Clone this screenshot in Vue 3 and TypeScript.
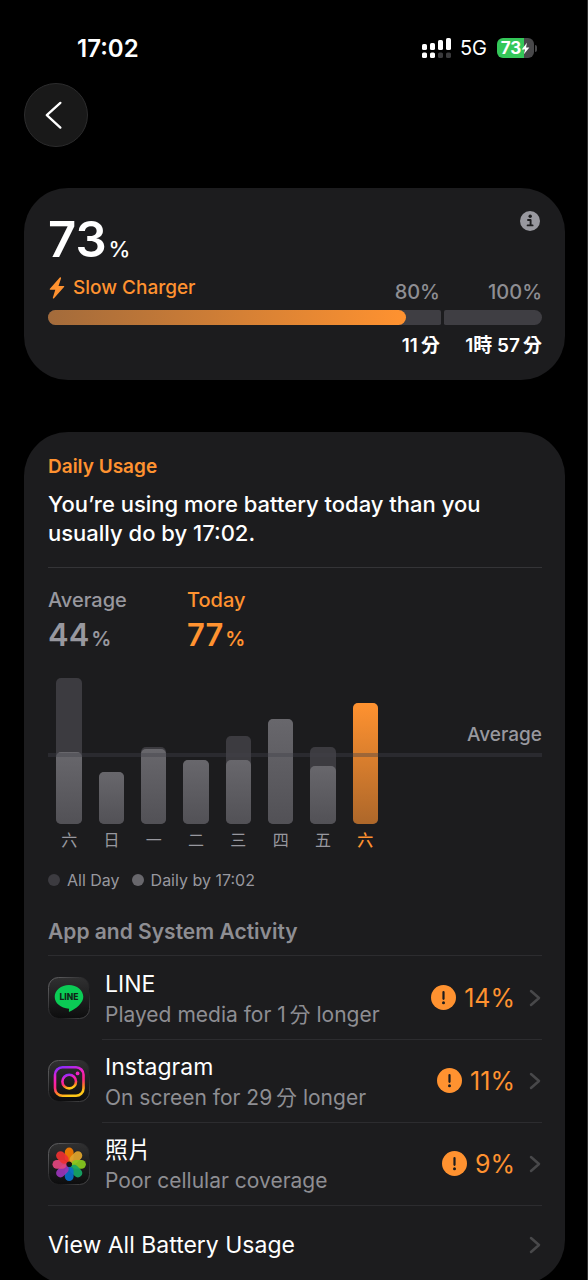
<script setup lang="ts">
interface DayUsage {
  label: string
  allDay: number
  byNow: number
  today?: boolean
}

interface AppActivity {
  id: 'line' | 'instagram' | 'photos'
  name: string
  detail: string
  percent: number
}

const days: DayUsage[] = [
  { label: '六', allDay: 93, byNow: 46 },
  { label: '日', allDay: 33, byNow: 33 },
  { label: '一', allDay: 49, byNow: 48 },
  { label: '二', allDay: 41, byNow: 41 },
  { label: '三', allDay: 56, byNow: 41 },
  { label: '四', allDay: 67, byNow: 67 },
  { label: '五', allDay: 49, byNow: 37 },
  { label: '六', allDay: 77, byNow: 77, today: true },
]

const average = 44

const apps: AppActivity[] = [
  { id: 'line', name: 'LINE', detail: 'Played media for 1\u2009分 longer', percent: 14 },
  { id: 'instagram', name: 'Instagram', detail: 'On screen for 29\u2009分 longer', percent: 11 },
  { id: 'photos', name: '照片', detail: 'Poor cellular coverage', percent: 9 },
]

const petals = [
  { angle: 0, color: '#f57c00' },
  { angle: 45, color: '#e0a52c' },
  { angle: 90, color: '#86c81e' },
  { angle: 135, color: '#16a765' },
  { angle: 180, color: '#0a6fc8' },
  { angle: 225, color: '#9a35b8' },
  { angle: 270, color: '#e0457e' },
  { angle: 315, color: '#ee3030' },
]
</script>

<template>
  <div class="page">
    <header class="status">
      <time class="clock">17:02</time>
      <div class="indicators">
        <svg class="signal" viewBox="0 0 29 20" aria-label="Signal strength">
          <g fill="#fff">
            <rect x="0" y="6" width="5" height="6" rx="1.6" />
            <rect x="8" y="5" width="5" height="7" rx="1.6" />
            <rect x="16" y="2" width="5" height="10" rx="1.6" />
            <rect x="24" y="0" width="5" height="12" rx="1.6" />
            <rect x="0" y="14.500" width="5" height="5.500" rx="1.600" />
            <rect x="8" y="14.500" width="5" height="5.500" rx="1.600" />
          </g>
          <g fill="#3a3a3c">
            <rect x="16" y="14.500" width="5" height="5.500" rx="1.600" />
            <rect x="24" y="14.500" width="5" height="5.500" rx="1.600" />
          </g>
        </svg>
        <span class="network">5G</span>
        <div class="battery">
          <span class="battery-body">73<svg viewBox="0 0 10 14" class="battery-bolt"><path d="M6.600 0.500 0.800 8h3.600L3.200 13.500 9.300 5.800H5.600Z" fill="#fff" /></svg></span>
          <span class="battery-cap"></span>
        </div>
      </div>
    </header>

    <button class="back" type="button" aria-label="Back">
      <svg viewBox="0 0 64 64">
        <path d="M36.500 19.500 22.500 32.200 36.500 45" fill="none" stroke="#fff" stroke-width="2.400" stroke-linecap="round" stroke-linejoin="round" />
      </svg>
    </button>

    <main>
      <section class="card charge">
        <div class="charge-top">
          <div class="level">73<small>%</small></div>
          <button class="info" type="button" aria-label="Information">
            <svg viewBox="0 0 20 20">
              <circle cx="10" cy="10" r="10" fill="#98989f" />
              <circle cx="10.200" cy="5.300" r="1.700" fill="#1c1c1e" />
              <path d="M8 9h2.600v5.200M7.600 14.400h5" fill="none" stroke="#1c1c1e" stroke-width="1.900" stroke-linecap="round" stroke-linejoin="round" />
            </svg>
          </button>
        </div>
        <div class="charge-labels">
          <div class="charger">
            <svg viewBox="0 0 16 22"><path d="M10.800 0.600 0.900 11.700c-.5.6-.2 1 .4 1h5L3.900 20.600c-.3 1 .5 1.300 1.100.6L15 9.900c.5-.6.200-1-.4-1H9.500l2.500-7.500c.3-1-.6-1.500-1.200-.8Z" fill="#ff9230" /></svg>
            <span>Slow Charger</span>
          </div>
          <span class="mark">80%</span>
          <span class="mark last">100%</span>
        </div>
        <div class="track">
          <div class="segment first"><div class="fill" :style="{ width: (73 / 80) * 100 + '%' }"></div></div>
          <div class="segment second"></div>
        </div>
        <div class="times">
          <span>11&#8201;分</span>
          <span class="last">1時 57&#8201;分</span>
        </div>
      </section>

      <section class="card usage">
        <h2>Daily Usage</h2>
        <p class="summary">You’re using more battery today than you usually do by 17:02.</p>

        <div class="stats">
          <div class="stat">
            <span class="stat-label">Average</span>
            <span class="stat-value">44<small>%</small></span>
          </div>
          <div class="stat now">
            <span class="stat-label">Today</span>
            <span class="stat-value">77<small>%</small></span>
          </div>
        </div>

        <div class="chart">
          <div class="plot">
            <div class="columns">
              <div v-for="(day, i) in days" :key="i" class="column">
                <div class="bar whole" :style="{ height: day.allDay + '%' }"></div>
                <div class="bar part" :class="{ today: day.today }" :style="{ height: day.byNow + '%' }"></div>
              </div>
            </div>
            <div class="average" :style="{ bottom: average + '%' }"><span>Average</span></div>
          </div>
          <div class="columns names">
            <span v-for="(day, i) in days" :key="i" :class="{ current: day.today }">{{ day.label }}</span>
          </div>
        </div>

        <div class="legend">
          <span class="dot"></span><span>All Day</span>
          <span class="dot light"></span><span>Daily by 17:02</span>
        </div>

        <h3>App and System Activity</h3>
        <ul class="apps">
          <li v-for="app in apps" :key="app.id">
            <a href="#" class="app">
              <svg v-if="app.id === 'line'" class="icon" viewBox="0 0 42 42">
                <defs>
                  <linearGradient id="tile" x1="0" y1="0" x2="0" y2="1"><stop offset="0" stop-color="#303031" /><stop offset="1" stop-color="#0d0d0e" /></linearGradient>
                  <linearGradient id="edge" x1="0" y1="0" x2="1" y2="1"><stop offset="0" stop-color="#6a6a6c" /><stop offset=".4" stop-color="#303032" /><stop offset=".65" stop-color="#1a1a1c" /><stop offset="1" stop-color="#505052" /></linearGradient>
                </defs>
                <rect x=".5" y=".5" width="41" height="41" rx="10" fill="url(#tile)" stroke="url(#edge)" />
                <path d="M21 8c8 0 14.300 5.200 14.300 11.800 0 3.300-1.600 6-4.400 8.600-2.800 2.600-6.400 4.900-9 6.100-1.100.5-1.200-.1-1-1l.2-1.700C12.500 31.100 6.700 26.100 6.700 19.800 6.700 13.200 13 8 21 8Z" fill="#0bcb55" />
                <text x="21" y="23.200" text-anchor="middle" font-family="Inter, sans-serif" font-weight="800" font-size="8.500" fill="#102417">LINE</text>
              </svg>
              <svg v-else-if="app.id === 'instagram'" class="icon" viewBox="0 0 42 42">
                <defs>
                  <linearGradient id="ig" x1=".15" y1="0" x2=".45" y2="1"><stop offset="0" stop-color="#8a2cff" /><stop offset=".3" stop-color="#ef20c8" /><stop offset=".62" stop-color="#ff2585" /><stop offset=".82" stop-color="#ff7a28" /><stop offset="1" stop-color="#ffc818" /></linearGradient>
                </defs>
                <rect x=".5" y=".5" width="41" height="41" rx="10" fill="url(#tile)" stroke="url(#edge)" />
                <g fill="none" stroke="url(#ig)" stroke-width="2.600">
                  <rect x="7" y="7.300" width="28.500" height="28.500" rx="7.500" />
                  <circle cx="21.200" cy="21.600" r="6.800" />
                </g>
                <circle cx="29.600" cy="13.400" r="1.900" fill="#f322c4" />
              </svg>
              <svg v-else class="icon" viewBox="0 0 42 42">
                <rect x=".5" y=".5" width="41" height="41" rx="10" fill="url(#tile)" stroke="url(#edge)" />
                <g>
                  <rect v-for="petal in petals" :key="petal.angle" x="16.800" y="4.600" width="8.800" height="14.200" rx="4.400" :fill="petal.color" fill-opacity=".93" :transform="`rotate(${petal.angle} 21.200 21.300)`" />
                </g>
                <circle cx="21.200" cy="21.300" r="2.600" fill="#161617" />
              </svg>
              <span class="copy">
                <span class="name">{{ app.name }}</span>
                <span class="detail">{{ app.detail }}</span>
              </span>
              <svg class="alert" viewBox="0 0 25 25">
                <circle cx="12.500" cy="12.500" r="12.500" fill="#ff9230" />
                <path d="M12.500 7v6.800" stroke="#1c1c1e" stroke-width="2.200" stroke-linecap="round" />
                <circle cx="12.500" cy="17.800" r="1.500" fill="#1c1c1e" />
              </svg>
              <span class="percent">{{ app.percent }}%</span>
              <svg class="chevron" viewBox="0 0 12 18"><path d="M2 2l8 7-8 7" /></svg>
            </a>
          </li>
        </ul>
        <a href="#" class="all">
          <span>View All Battery Usage</span>
          <svg class="chevron" viewBox="0 0 12 18"><path d="M2 2l8 7-8 7" /></svg>
        </a>
      </section>
    </main>
  </div>
</template>

<style>
body {
  background: #000;
}
</style>

<style scoped>
.page {
  box-sizing: border-box;
  height: 100vh;
  overflow-y: auto;
  scrollbar-width: none;
  padding: 0 22px 0 24px;
  border-right: 1px solid #303030;
  background: #000;
  color: #fff;
  font-family: Inter, "Noto Sans CJK TC", sans-serif;
}

h2, h3, p, ul {
  margin: 0;
  padding: 0;
}

ul {
  list-style: none;
}

a {
  color: inherit;
  text-decoration: none;
}

button {
  display: block;
  padding: 0;
  border: 0;
  background: none;
}

svg {
  display: block;
  flex: none;
}

.status {
  display: flex;
  align-items: center;
  justify-content: space-between;
  padding: 32px 28px 0 53px;
  height: 32px;
}

.clock {
  font-size: 24px;
  font-weight: 600;
}

.indicators {
  display: flex;
  align-items: center;
}

.signal {
  width: 29px;
  height: 20px;
}

.network {
  margin: 0 10px 0 9px;
  font-size: 20px;
}

.battery {
  display: flex;
  align-items: center;
  gap: 1px;
}

.battery-body {
  display: flex;
  align-items: center;
  justify-content: center;
  width: 37px;
  height: 20px;
  border-radius: 6px;
  background: linear-gradient(90deg, #34c759 73%, #48484a 73%);
  font-size: 17px;
  font-weight: 700;
}

.battery-bolt {
  width: 9px;
  height: 13px;
}

.battery-cap {
  width: 2px;
  height: 7px;
  border-radius: 0 2px 2px 0;
  background: #48484a;
}

.back {
  box-sizing: border-box;
  width: 64px;
  height: 64px;
  margin-top: 19px;
  border: 1px solid #2c2c2d;
  border-radius: 50%;
  background: #191919;
}

.back svg {
  width: 62px;
  height: 62px;
}

.card {
  border-radius: 44px;
  background: #1c1c1e;
  padding: 0 23px 0 24px;
}

.charge {
  margin-top: 41px;
  padding-top: 23px;
  padding-bottom: 22px;
}

.charge-top {
  display: flex;
  justify-content: space-between;
}

.level {
  font-size: 49px;
  font-weight: 600;
  line-height: 58px;
}

.level small {
  margin-left: 2px;
  font-size: 22px;
  font-weight: 500;
}

.info {
  width: 20px;
  height: 20px;
  margin-right: 2px;
}

.charge-labels {
  display: flex;
  align-items: flex-end;
  height: 26px;
  color: #8e8e93;
  font-size: 20px;
  font-weight: 500;
  line-height: 24px;
}

.charger {
  display: flex;
  flex: 1;
  align-items: center;
  gap: 8px;
  padding: 0 0 4px 1px;
  color: #ff9230;
  font-size: 19px;
}

.charger svg {
  width: 16px;
  height: 22px;
}

.mark.last,
.times .last {
  width: 102px;
  text-align: right;
}

.track {
  display: flex;
  gap: 3px;
  margin-top: 6px;
}

.segment {
  height: 15px;
  background: #3f3e43;
}

.first {
  flex: 80;
  border-radius: 8px 2px 2px 8px;
}

.second {
  flex: 20;
  border-radius: 2px 8px 8px 2px;
}

.fill {
  height: 100%;
  border-radius: 8px;
  background: linear-gradient(90deg, #a36b3b, #ff9230);
}

.times {
  display: flex;
  justify-content: flex-end;
  margin-top: 9px;
  font-size: 19px;
  font-weight: 600;
  line-height: 24px;
}

.usage {
  margin-top: 52px;
  padding-top: 23px;
}

h2 {
  color: #ff9230;
  font-size: 19px;
  font-weight: 600;
  line-height: 24px;
}

.summary {
  padding: 11px 0 19px;
  border-bottom: 1px solid #343437;
  font-size: 22px;
  font-weight: 500;
  line-height: 29px;
}

.stats {
  display: flex;
  margin-top: 20px;
  color: #98989f;
}

.stat {
  width: 139px;
}

.stat-label,
.stat-value {
  display: block;
}

.stat-label {
  font-size: 20px;
  font-weight: 500;
  line-height: 24px;
}

.stat-value {
  margin-top: 3px;
  font-size: 31px;
  font-weight: 600;
  line-height: 40px;
}

.stat-value small {
  margin-left: 2px;
  font-size: 20px;
}

.now {
  color: #ff9230;
}

.chart {
  margin-top: 8px;
}

.plot {
  position: relative;
  height: 157px;
}

.columns {
  display: grid;
  grid-template-columns: repeat(8, 1fr);
  width: 68.5%;
  height: 100%;
}

.column {
  display: grid;
  align-items: end;
  justify-items: center;
}

.bar {
  grid-area: 1 / 1;
  width: 60%;
  border-radius: 5px;
}

.whole {
  background: #3c3b40;
}

.part {
  background: linear-gradient(#68676c, #525156);
}

.today {
  background: linear-gradient(#ff9230, #ad672a);
}

.average {
  position: absolute;
  left: 0;
  right: 0;
  height: 4px;
  margin-bottom: -2px;
  background: rgba(66, 65, 73, .4);
}

.average span {
  position: absolute;
  right: 0;
  bottom: 12px;
  color: #98989f;
  font-size: 19px;
  font-weight: 500;
  line-height: 20px;
}

.names {
  height: 32px;
  color: #98989f;
  font-size: 16px;
  line-height: 32px;
  text-align: center;
}

.current {
  color: #ff9230;
  font-weight: 500;
}

.legend {
  display: flex;
  align-items: center;
  gap: 7px;
  margin-top: 14px;
  color: #98989f;
  font-size: 16px;
  line-height: 20px;
}

.dot {
  width: 12px;
  height: 12px;
  border-radius: 50%;
  background: #3c3b40;
}

.light {
  margin-left: 5px;
  background: #68676c;
}

h3 {
  margin-top: 27px;
  padding-bottom: 8px;
  border-bottom: 1px solid #2c2c2f;
  color: #8e8e93;
  font-size: 21px;
  font-weight: 600;
  line-height: 30px;
}

.app {
  display: flex;
  align-items: center;
  height: 83px;
}

.icon {
  width: 42px;
  height: 42px;
}

.copy {
  flex: 1;
  margin-left: 15px;
  padding-top: 2px;
}

.name,
.detail {
  display: block;
}

.name {
  font-size: 23px;
  line-height: 32px;
}

.detail {
  color: #8e8e93;
  font-size: 21px;
  line-height: 30px;
}

.apps li + li {
  background: linear-gradient(#2c2c2f, #2c2c2f) 54px 0 / 100% 1px no-repeat;
}

.alert {
  width: 25px;
  height: 25px;
}

.percent {
  margin-left: 8px;
  color: #ff9230;
  font-size: 25px;
}

.chevron {
  width: 12px;
  height: 18px;
  margin: 0 1px 0 14px;
}

.chevron path {
  fill: none;
  stroke: #48484a;
  stroke-width: 2.5;
  stroke-linecap: round;
  stroke-linejoin: round;
}

.all {
  display: flex;
  align-items: center;
  justify-content: space-between;
  height: 78px;
  border-top: 1px solid #2c2c2f;
  font-size: 23px;
}
</style>
